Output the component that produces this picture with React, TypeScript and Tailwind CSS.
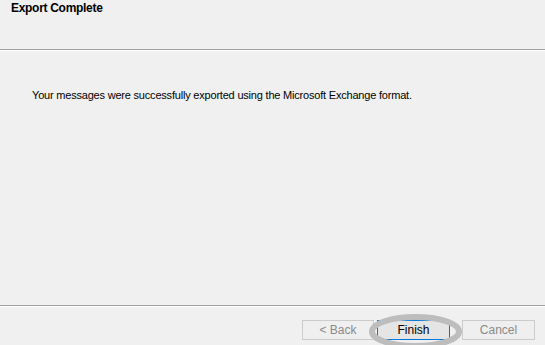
import React from 'react';

export default function App() {
  return (
    <div className="relative w-[545px] h-[345px] bg-[#f0f0f0] flex flex-col overflow-hidden" style={{ fontFamily: '"Liberation Sans", Arial, sans-serif' }}>
      {/* Header */}
      <div className="h-[49px] px-[11px] pt-[1px]">
        <h1 className="text-[12px] font-bold text-black leading-[14px] tracking-[-0.3px]">Export Complete</h1>
      </div>
      <div className="h-px bg-[#a0a0a0]" />
      <div className="h-px bg-white" />

      {/* Body */}
      <div className="flex-1 px-[32px] pt-[37px]">
        <p className="text-[11px] text-black leading-[14px] tracking-[-0.2px]">
          Your messages were successfully exported using the Microsoft Exchange format.
        </p>
      </div>

      {/* Footer */}
      <div className="h-px bg-[#a0a0a0]" />
      <div className="h-px bg-white" />
      <div className="h-[38px] flex items-start justify-end gap-[3px] pr-[10px] pt-[13px]">
        <button className="w-[72px] h-[20px] border border-[#cccccc] bg-[#efefef] text-[12px] text-[#8a8a8a]">
          &lt; Back
        </button>
        <button className="relative w-[73px] h-[20px] border border-[#0078d7] bg-[#e5e5e5] text-[12px] text-black">
          Finish
        </button>
        <button className="ml-[9px] w-[73px] h-[20px] border border-[#cccccc] bg-[#efefef] text-[12px] text-[#8a8a8a]">
          Cancel
        </button>
      </div>

      {/* Annotation ellipse */}
      <svg className="absolute left-[366px] top-[310px]" width="100" height="44" viewBox="0 0 100 44">
        <ellipse cx="49.5" cy="21.5" rx="43.5" ry="14.5" fill="none" stroke="#bdbdbd" strokeWidth="6" />
      </svg>
    </div>
  );
}
